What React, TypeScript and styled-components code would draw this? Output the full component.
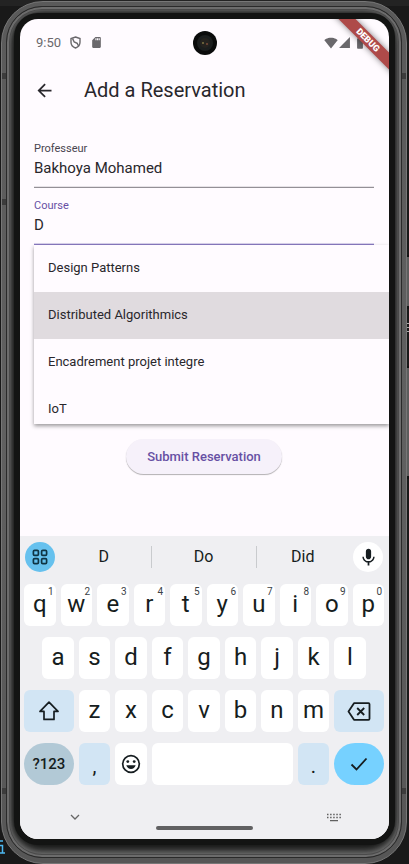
import React, { useState } from "react";
import styled, { createGlobalStyle, css } from "styled-components";
import {
  MdArrowBack,
  MdSdCard,
  MdSignalWifi4Bar,
  MdSignalCellular4Bar,
  MdBatteryFull,
  MdMic,
} from "react-icons/md";

const GlobalStyle = createGlobalStyle`
  *, *::before, *::after { box-sizing: border-box; }
  body {
    margin: 0;
    background: #1c1c1c;
    font-family: Roboto, "Liberation Sans", sans-serif;
    color: #29272c;
  }
  button, input { font: inherit; color: inherit; }
  button { border: 0; padding: 0; background: none; cursor: pointer; }
`;

/* ---------- device ---------- */

const Desktop = styled.div`
  position: relative;
  display: flex;
  min-height: 100vh;
  padding: 1px 2px 0 1px;
  overflow: hidden;
  background: linear-gradient(#232323 0 6px, #191919 6px);
`;

const SideButton = styled.div<{ $top: number; $length: number }>`
  position: absolute;
  right: 0;
  top: ${(p) => p.$top}px;
  width: 3px;
  height: ${(p) => p.$length}px;
  border: solid #111;
  border-width: 2px 0 3px 0;
  background: #5c5c5c;
`;

const WindowText = styled.svg`
  position: absolute;
`;
const RightText = styled(WindowText)`
  right: 0;
  top: 322px;
`;
const LeftText = styled(WindowText)`
  left: 0;
  bottom: 9px;
`;

const Chassis = styled.div`
  position: relative;
  display: flex;
  flex: 1;
  padding: 4px 4px 5px;
  border: 1px solid #777;
  border-radius: 42px;
  background: linear-gradient(#5a5a5a, #606060 50%, #565656);
`;

const AntennaBand = styled.div<{ $side: "left" | "right"; $top: number }>`
  position: absolute;
  ${(p) => p.$side}: 0;
  top: ${(p) => p.$top}px;
  width: 4px;
  height: 6px;
  background: #3c3c3c;
`;

const Bezel = styled.div`
  display: flex;
  flex: 1;
  padding: 12px 12px 18px 13px;
  border: 1px solid #2a2a2a;
  border-radius: 36px;
  background: #131413;
  box-shadow:
    inset 0 0 0 2px #6c6c6c,
    inset 0 0 0 3px #4a4a4a,
    inset 0 2px 6px 2px #777,
    inset 0 -4px 9px 2px #777;
`;

const Screen = styled.main`
  position: relative;
  display: flex;
  flex: 1;
  min-width: 0;
  flex-direction: column;
  overflow: hidden;
  border-radius: 18px;
  background: #fffbff;
  box-shadow: 0 0 0 6px #131413;
`;

/* ---------- status bar and app bar ---------- */

const StatusBar = styled.div`
  display: grid;
  grid-template-columns: 1fr 24px 1fr;
  align-items: center;
  height: 47px;
  padding: 0 16px;
  color: #6a686c;
`;

const StatusGroup = styled.div<{ $end?: boolean }>`
  display: flex;
  align-items: center;
  justify-content: ${(p) => (p.$end ? "flex-end" : "flex-start")};
  gap: ${(p) => (p.$end ? 0 : 9)}px;
  padding-right: ${(p) => (p.$end ? 6 : 0)}px;
`;

const Battery = styled(MdBatteryFull)`
  margin-left: 2px;
`;

const Clock = styled.span`
  font-size: 13px;
  line-height: 16px;
`;

const Camera = styled.svg`
  display: block;
`;

const Ribbon = styled.div`
  position: absolute;
  top: 15px;
  right: -29px;
  width: 100px;
  height: 12px;
  transform: rotate(45deg);
  background: #ae4a49;
  box-shadow: 0 0 6px rgba(0, 0, 0, 0.5);
  color: #fff;
  font-size: 9px;
  font-weight: 900;
  line-height: 12px;
  text-align: center;
`;

const AppBar = styled.header`
  display: flex;
  align-items: center;
  gap: 29px;
  height: 48px;
  padding: 0 14px;
`;

const BackButton = styled.button`
  display: flex;
`;

const Title = styled.h1`
  margin: 0;
  font-size: 20px;
  font-weight: 400;
  line-height: 26px;
`;

/* ---------- form ---------- */

const Form = styled.form`
  display: flex;
  flex: 1;
  flex-direction: column;
  padding: 26px 15px 0 14px;
`;

const Field = styled.div<{ $active?: boolean }>`
  position: relative;
  display: flex;
  flex-direction: column;
  height: ${(p) => (p.$active ? 57 : 48)}px;
  padding-top: ${(p) => (p.$active ? 11 : 2)}px;
  border-bottom: 1px solid ${(p) => (p.$active ? "#8a7bc2" : "#949096")};
  box-shadow: inset 0 -1px 0 ${(p) => (p.$active ? "#d9d2ec" : "#e6e2e7")};
`;

const Label = styled.label<{ $active?: boolean }>`
  font-size: 11px;
  line-height: 14px;
  color: ${(p) => (p.$active ? "#6750a4" : "#49454f")};
`;

const TextInput = styled.input`
  width: 100%;
  height: 24px;
  padding: 0;
  border: 0;
  outline: 0;
  background: transparent;
  font-size: 15px;
  line-height: 24px;
  caret-color: transparent;
`;

const Options = styled.ul`
  position: absolute;
  z-index: 1;
  top: 100%;
  left: 0;
  right: -15px;
  height: 179px;
  margin: 1px 0 0;
  padding: 0;
  overflow: hidden;
  list-style: none;
  background: #fffbff;
  box-shadow: 0 2px 4px rgba(0, 0, 0, 0.4);
`;

const Option = styled.li<{ $highlighted: boolean }>`
  height: 47px;
  padding: 0 14px;
  background: ${(p) => (p.$highlighted ? "#e0dbdf" : "transparent")};
  font-size: 13px;
  line-height: 46px;
  cursor: pointer;
`;

const SubmitButton = styled.button`
  align-self: center;
  height: 35px;
  margin-top: 194px;
  padding: 0 21px;
  border-radius: 18px;
  background: #f6f1fa;
  box-shadow: 0 1px 1px rgba(0, 0, 0, 0.3);
  color: #6750a4;
  font-size: 13px;
  font-weight: 500;
`;

/* ---------- keyboard ---------- */

const Keyboard = styled.section`
  display: flex;
  flex-direction: column;
  padding-top: 6px;
  background: #efeff2;
  color: #161d20;
`;

const SuggestionStrip = styled.div`
  display: flex;
  align-items: center;
  height: 30px;
  margin-bottom: 12px;
  padding: 0 6px 0 5px;
`;

const RoundButton = styled.button<{ $tint: string }>`
  display: flex;
  flex: none;
  align-items: center;
  justify-content: center;
  width: 30px;
  height: 30px;
  border-radius: 50%;
  background: ${(p) => p.$tint};
`;

const Suggestions = styled.div`
  display: grid;
  flex: 1;
  grid-template-columns: 1fr 105px 1fr;
  height: 22px;
  padding: 0 4px 0 2px;
`;

const Suggestion = styled.button`
  font-size: 16px;
  line-height: 22px;

  & + & {
    border-left: 1px solid #c9cbce;
  }
`;

const Rows = styled.div`
  display: flex;
  flex-direction: column;
  gap: 11px;
  padding: 0 2px;
`;

const KeyRow = styled.div<{ $inset?: boolean }>`
  display: grid;
  grid-template-columns: repeat(20, minmax(0, 1fr));
  height: 42px;

  ${(p) =>
    p.$inset &&
    css`
      & > :first-child {
        grid-column: 2 / span 2;
      }
    `}
`;

type Tone = "plain" | "soft" | "mode" | "enter";

const tones: Record<Tone, string> = {
  plain: "#ffffff",
  soft: "#d2e5f4",
  mode: "#b2c9d6",
  enter: "#76d1ff",
};

const Key = styled.button<{ $span?: number; $tone?: Tone; $small?: boolean }>`
  position: relative;
  display: flex;
  grid-column: span ${(p) => p.$span ?? 2};
  align-items: center;
  justify-content: center;
  margin: 0 3px 0 2px;
  border-radius: ${(p) =>
    p.$tone === "mode" || p.$tone === "enter" ? 21 : 6}px;
  background: ${(p) => tones[p.$tone ?? "plain"]};
  font-size: ${(p) => (p.$small ? 15 : 24)}px;
  font-weight: ${(p) => (p.$small ? 500 : 400)};
  line-height: 28px;
  ${(p) => !p.$small && "padding-bottom: 3px;"}
`;

const IconKey = styled(Key)`
  padding-bottom: 0;
`;

const PunctuationKey = styled(Key)`
  padding: 4px 0 0;
  font-size: 20px;
`;

const Hint = styled.span`
  position: absolute;
  top: 2px;
  right: 2px;
  font-size: 10px;
  line-height: 12px;
  color: #3b4246;
`;

const NavBar = styled.nav`
  display: grid;
  grid-template-columns: 1fr 97px 1fr;
  height: 54px;
  padding-top: 24px;
`;

const NavButton = styled.button`
  display: flex;
  align-items: center;
  justify-content: center;
  height: 16px;
  padding: 0 27px 0 0;

  &:last-child {
    padding: 0 0 0 25px;
  }
`;

const HomeHandle = styled.div`
  height: 4px;
  margin-top: 17px;
  border-radius: 2px;
  background: #606062;
`;

/* ---------- icons ---------- */

const ShieldIcon = () => (
  <svg width="11" height="13" viewBox="0 0 11 13" fill="none" stroke="currentColor" aria-hidden>
    <path d="M5.500 1 10 2.600v3.600c0 2.600-1.800 4.800-4.500 5.800C2.800 11 1 8.800 1 6.200V2.600z" strokeWidth="1.400" />
    <path d="M2.600 2.600 4.200 6l3 1.400L8.600 10" strokeWidth="1.400" />
  </svg>
);

const CameraLens = () => (
  <Camera width="24" height="24" viewBox="0 0 24 24" aria-hidden>
    <circle cx="12" cy="12" r="12" fill="#0a0b0b" />
    <circle cx="12" cy="12" r="8" fill="#1b1e1e" />
    <circle cx="12" cy="12" r="5" fill="#25231f" />
    <circle cx="10" cy="12" r="1" fill="#7e7443" />
    <circle cx="14" cy="13" r="1" fill="#7a4a38" />
  </Camera>
);

const GridIcon = () => (
  <svg width="16" height="16" viewBox="0 0 16 16" fill="none" stroke="#0f3444" strokeWidth="1.700" aria-hidden>
    <rect x="1.400" y="1.400" width="5" height="5" rx="1.200" />
    <rect x="9.600" y="1.400" width="5" height="5" rx="1.200" />
    <rect x="1.400" y="9.600" width="5" height="5" rx="1.200" />
    <rect x="9.600" y="9.600" width="5" height="5" rx="1.200" />
  </svg>
);

const ShiftIcon = () => (
  <svg width="22" height="20" viewBox="0 0 22 20" fill="none" stroke="currentColor" strokeWidth="1.700" strokeLinejoin="round" aria-hidden>
    <path d="M11 1.200 20 10.400h-4v8H6v-8H2z" />
  </svg>
);

const BackspaceIcon = () => (
  <svg width="24" height="19" viewBox="0 0 24 19" fill="none" stroke="currentColor" strokeWidth="1.800" strokeLinejoin="round" aria-hidden>
    <path d="M7 1.200h14.500q1 0 1 1v14.600q0 1-1 1H7L1.500 9.500z" />
    <path d="m10.200 6 7 7m0-7-7 7" />
  </svg>
);

const SmileyIcon = () => (
  <svg width="20" height="20" viewBox="0 0 20 20" fill="currentColor" aria-hidden>
    <circle cx="10" cy="10" r="8.300" fill="none" stroke="currentColor" strokeWidth="1.700" />
    <circle cx="6.800" cy="7.600" r="1.400" />
    <circle cx="13.200" cy="7.600" r="1.400" />
    <path d="M5.300 11.300h9.400c-.7 2.300-2.500 3.700-4.700 3.700s-4-1.400-4.700-3.700z" />
  </svg>
);

const CheckIcon = () => (
  <svg width="18" height="14" viewBox="0 0 18 14" fill="none" stroke="currentColor" strokeWidth="1.800" aria-hidden>
    <path d="m1.500 7.500 5 5L16.500 1.500" />
  </svg>
);

const ChevronIcon = () => (
  <svg width="10" height="6" viewBox="0 0 10 6" fill="none" stroke="#666" strokeWidth="1.300" aria-hidden>
    <path d="m1 1 4 4 4-4" />
  </svg>
);

const KeyboardIcon = () => (
  <svg width="14" height="9" viewBox="0 0 14 9" stroke="#606060" aria-hidden>
    <path d="M0 1.500h14M0 4.500h14" strokeWidth="1.400" strokeDasharray="1.500 1.600" />
    <path d="M3 7.700h8" strokeWidth="1.200" />
  </svg>
);

const courses = ["Design Patterns", "Distributed Algorithmics", "Encadrement projet integre", "IoT"];

export default function App() {
  const [teacher, setTeacher] = useState("Bakhoya Mohamed");
  const [course, setCourse] = useState("D");
  const [highlighted, setHighlighted] = useState(1);

  return (
    <>
      <GlobalStyle />
      <Desktop>
        <LeftText width="5" height="15" viewBox="0 0 5 15" fill="none" stroke="#4db8f0" aria-hidden>
          <path d="M0 1h3M0 5.500h2.500v7M0 13h5" strokeWidth="1.500" />
        </LeftText>
        <RightText width="3" height="10" viewBox="0 0 3 10" stroke="#aaa" aria-hidden>
          <path d="M0 1.500h3M0 5.500h3M0 9.500h3" />
        </RightText>
        <SideButton $top={255} $length={54} />
        <SideButton $top={366} $length={113} />
        <Chassis>
          <AntennaBand $side="left" $top={71} />
          <AntennaBand $side="left" $top={197} />
          <AntennaBand $side="left" $top={786} />
          <AntennaBand $side="right" $top={71} />
          <AntennaBand $side="right" $top={786} />
          <Bezel>
            <Screen>
              <StatusBar>
                <StatusGroup>
                  <Clock>9:50</Clock>
                  <ShieldIcon />
                  <MdSdCard size={13} />
                </StatusGroup>
                <CameraLens />
                <StatusGroup $end>
                  <MdSignalWifi4Bar size={14} />
                  <MdSignalCellular4Bar size={13} />
                  <Battery size={14} />
                </StatusGroup>
              </StatusBar>
              <Ribbon>DEBUG</Ribbon>
              <AppBar>
                <BackButton type="button" aria-label="Back">
                  <MdArrowBack size={21} />
                </BackButton>
                <Title>Add a Reservation</Title>
              </AppBar>
              <Form onSubmit={(e) => e.preventDefault()}>
                <Field>
                  <Label htmlFor="teacher">Professeur</Label>
                  <TextInput id="teacher" value={teacher} onChange={(e) => setTeacher(e.target.value)} />
                </Field>
                <Field $active>
                  <Label htmlFor="course" $active>
                    Course
                  </Label>
                  <TextInput
                    id="course"
                    role="combobox"
                    aria-expanded
                    aria-controls="courses"
                    autoComplete="off"
                    value={course}
                    onChange={(e) => setCourse(e.target.value)}
                  />
                  <Options id="courses" role="listbox" aria-label="Courses">
                    {courses.map((name, i) => (
                      <Option
                        key={name}
                        role="option"
                        aria-selected={i === highlighted}
                        $highlighted={i === highlighted}
                        onMouseEnter={() => setHighlighted(i)}
                        onClick={() => setCourse(name)}
                      >
                        {name}
                      </Option>
                    ))}
                  </Options>
                </Field>
                <SubmitButton type="submit">Submit Reservation</SubmitButton>
              </Form>
              <Keyboard aria-label="Keyboard">
                <SuggestionStrip>
                  <RoundButton type="button" $tint="#66c1ee" aria-label="Toolbar">
                    <GridIcon />
                  </RoundButton>
                  <Suggestions>
                    {["D", "Do", "Did"].map((word) => (
                      <Suggestion key={word} type="button">
                        {word}
                      </Suggestion>
                    ))}
                  </Suggestions>
                  <RoundButton type="button" $tint="#ffffff" aria-label="Voice input">
                    <MdMic size={21} />
                  </RoundButton>
                </SuggestionStrip>
                <Rows>
                  <KeyRow>
                    {[..."qwertyuiop"].map((letter, i) => (
                      <Key key={letter} type="button">
                        {letter}
                        <Hint>{(i + 1) % 10}</Hint>
                      </Key>
                    ))}
                  </KeyRow>
                  <KeyRow $inset>
                    {[..."asdfghjkl"].map((letter) => (
                      <Key key={letter} type="button">
                        {letter}
                      </Key>
                    ))}
                  </KeyRow>
                  <KeyRow>
                    <IconKey type="button" $span={3} $tone="soft" aria-label="Shift">
                      <ShiftIcon />
                    </IconKey>
                    {[..."zxcvbnm"].map((letter) => (
                      <Key key={letter} type="button">
                        {letter}
                      </Key>
                    ))}
                    <IconKey type="button" $span={3} $tone="soft" aria-label="Backspace">
                      <BackspaceIcon />
                    </IconKey>
                  </KeyRow>
                  <KeyRow>
                    <Key type="button" $span={3} $tone="mode" $small>
                      ?123
                    </Key>
                    <PunctuationKey type="button" $tone="soft">
                      ,
                    </PunctuationKey>
                    <IconKey type="button" aria-label="Emoji">
                      <SmileyIcon />
                    </IconKey>
                    <Key type="button" $span={8} aria-label="Space" />
                    <PunctuationKey type="button" $tone="soft">
                      .
                    </PunctuationKey>
                    <IconKey type="button" $span={3} $tone="enter" aria-label="Done">
                      <CheckIcon />
                    </IconKey>
                  </KeyRow>
                </Rows>
                <NavBar>
                  <NavButton type="button" aria-label="Hide keyboard">
                    <ChevronIcon />
                  </NavButton>
                  <HomeHandle />
                  <NavButton type="button" aria-label="Switch keyboard">
                    <KeyboardIcon />
                  </NavButton>
                </NavBar>
              </Keyboard>
            </Screen>
          </Bezel>
        </Chassis>
      </Desktop>
    </>
  );
}
